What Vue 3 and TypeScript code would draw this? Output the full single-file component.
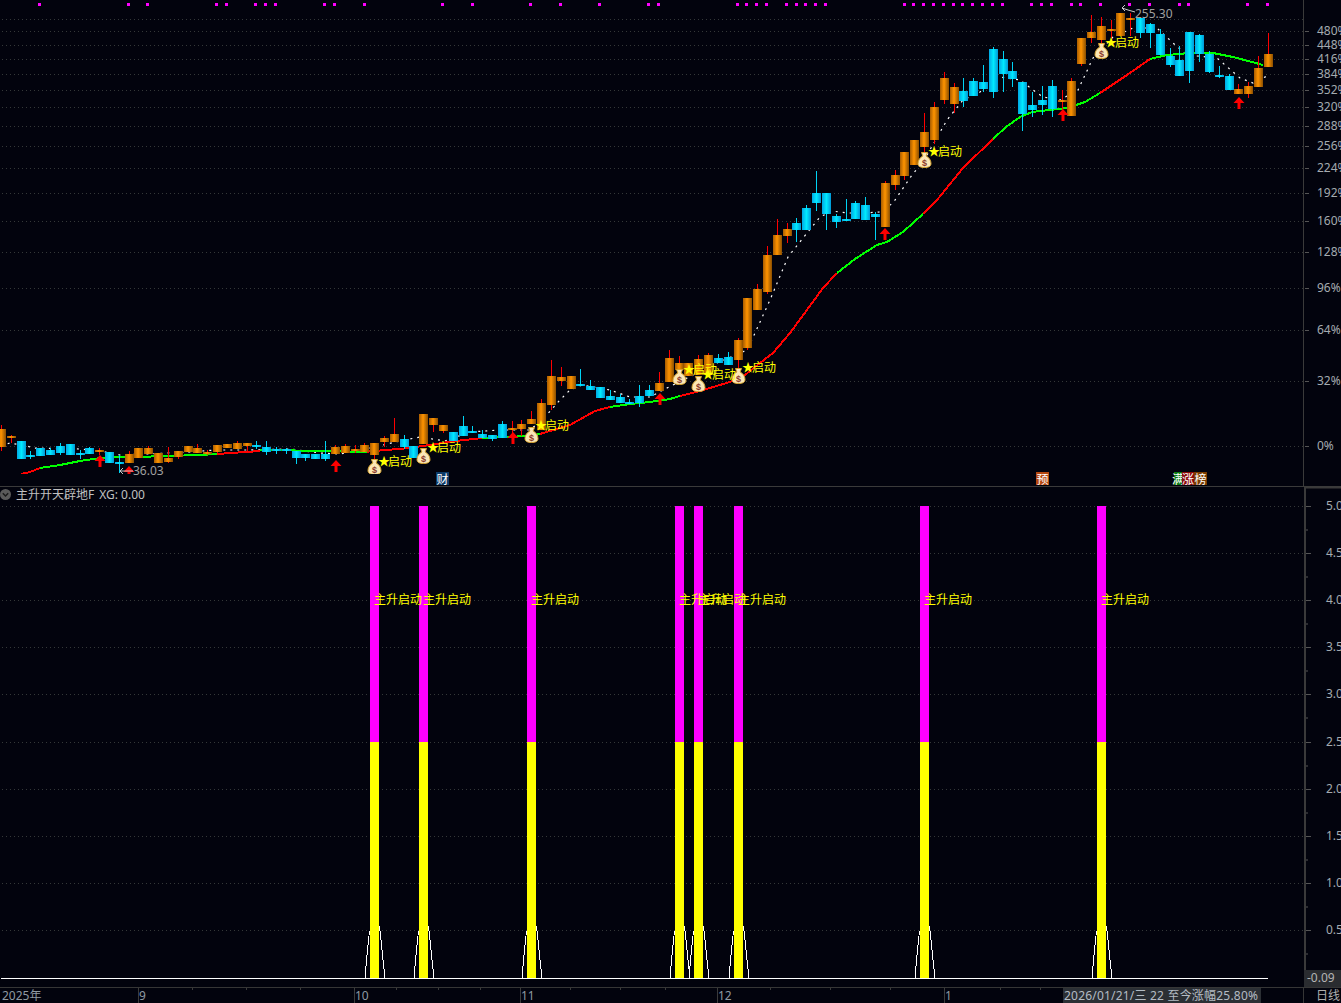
<script setup lang="ts">
type Candle = [string, number, number, number?, number?];

const raw: Candle[] = [
  ['o',429,447,425,451],['o',436,438,435,443],['c',441,459],['c',455,457,451,459],['c',448,456],
  ['c',450,455,448,455],['c',446,453,443,455],['c',444,455],['c',453,455,450,459],['c',448,454,447,454],
  ['o',450,451,448,455],['c',452,463],['c',462,463,455,473],['o',454,463,451,463],['o',448,458],
  ['o',448,454,446,454],['o',453,463],['o',458,462,447,463],['o',451,457,451,459],['o',446,452],
  ['o',448,453,444,453],['o',452,453,450,455],['o',445,452,445,455],['o',444,448],['o',443,449,441,449],
  ['o',443,446,443,452],['c',445,447,441,449],['c',447,452,441,455],['c',449,450,447,454],['c',449,450,448,454],
  ['c',451,458,451,464],['c',454,458,454,461],['c',454,459],['c',454,459,441,461],['o',447,454,445,454],
  ['o',446,453,444,453],['o',449,451,445,453],['o',445,452,443,452],['o',443,455,443,462],['o',438,442,436,447],
  ['o',434,442,418,442],['c',439,447,435,449],['c',446,458],['o',414,444],['o',418,425,418,432],
  ['o',425,431,425,433],['c',432,441],['c',426,436,416,436],['c',431,433,426,433],['c',434,438,430,438],
  ['c',435,439,435,441],['c',424,438,421,438],['o',428,430,421,444],['o',424,429,420,436],['o',419,424,411,424],
  ['o',403,430,399,430],['o',376,405,360,410],['o',377,381,367,386],['o',376,389],['c',384,385,369,386],
  ['c',386,390,380,390],['c',387,398],['c',396,400,390,400],['c',397,403,394,403],['c',402,403,399,404],
  ['c',396,403,385,407],['c',390,396,385,396],['o',383,391,372,391],['o',358,382,350,382],['o',363,370,356,373],
  ['o',363,376],['o',359,375,355,375],['o',355,375,353,375],['c',358,363,354,363],['c',357,365,352,365],
  ['o',340,360,338,368],['o',298,348,298,350],['o',289,310,284,310],['o',255,292,246,294],['o',235,255,219,255],
  ['o',229,236,223,243],['c',223,230,218,242],['c',208,230,205,230],['c',193,203,171,211],['c',193,214,193,230],
  ['c',216,222,214,228],['c',219,220,199,220],['c',203,219,201,219],['c',205,220,197,220],['c',214,217,212,240],
  ['o',183,227,181,227],['o',175,185,170,190],['o',152,176,152,180],['o',140,165],['o',132,147,113,152],
  ['o',107,140,102,144],['o',78,100,72,104],['o',87,104,83,113],['c',91,101,78,107],['c',81,96,78,96],
  ['c',82,89,65,92],['c',49,92,47,98],['c',59,74,51,92],['c',71,79,62,87],['c',82,114,82,131],
  ['c',105,110,92,117],['c',100,105,86,115],['c',86,109,80,117],['o',100,102,90,110],['o',81,116,78,116],
  ['o',38,64,38,66],['o',32,38,15,43],['o',26,40,17,45],['o',29,30,20,39],['o',13,36],
  ['o',18,19,13,36],['c',18,33,18,38],['c',24,33,23,48],['c',34,55,29,55],['c',56,65,48,67],
  ['c',60,76,46,76],['c',32,71,32,83],['c',35,54,34,62],['c',54,72,51,73],['c',75,77,66,78],
  ['c',76,90,74,90],['o',89,94,84,94],['o',86,94,82,98],['o',68,87,56,87],['o',54,67,33,67],
];

const candles = raw.map((d, i) => {
  const x = 1.5 + 9.82 * i;
  const top = d[1];
  const h = Math.max(d[2] - d[1], 1.5);
  return {
    id: i,
    body: Math.round(x - 4.5),
    wick: Math.round(x - 0.5),
    top,
    h,
    wickTop: d[3] ?? top,
    wickH: (d[4] ?? d[2]) - (d[3] ?? top),
    up: d[0] === 'o',
  };
});

const axisTop = ['480%|31', '448%|45', '416%|59', '384%|74', '352%|90', '320%|107', '288%|126', '256%|146', '224%|168', '192%|193', '160%|221', '128%|252', '96%|288', '64%|330', '32%|381', '0%|446']
  .map((s) => { const [label, y] = s.split('|'); return { label, y: Number(y) }; });
const gridTop = [19, ...axisTop.map((a) => a.y)];

const axisLow = [
  { label: '5.0', y: 506 }, { label: '4.5', y: 553 }, { label: '4.0', y: 600 }, { label: '3.5', y: 647 }, { label: '3.0', y: 694 },
  { label: '2.5', y: 742 }, { label: '2.0', y: 789 }, { label: '1.5', y: 836 }, { label: '1.0', y: 883 }, { label: '0.5', y: 930 },
];
const gridLow = axisLow.map((a) => a.y);
const minorLow = axisLow.map((a) => a.y + 23.5);

const squares = [39, 128, 147, 216, 226, 255, 265, 275, 324, 334, 364, 442, 472, 530, 560, 599, 648, 658, 737, 746, 756, 766, 786, 796, 805, 815, 825, 904, 913, 923, 933, 943, 953, 962, 972, 982, 992, 1002, 1031, 1041, 1051, 1071, 1080, 1100, 1129, 1149, 1179, 1188, 1247, 1267];

const maSegments: { color: string; pts: string }[] = [
  { color: '#ff0000', pts: '21,474 30,472 40,468' },
  { color: '#00ff00', pts: '40,468 60,465 80,461 100,458 120,457 145,456.7 200,455 217,454' },
  { color: '#ff0000', pts: '217,454 260,451' },
  { color: '#00ff00', pts: '260,450 330,451 350,451.7 367,451.7' },
  { color: '#ff0000', pts: '367,451.7 385,450 400,449 430,445 450,441.7 482,438' },
  { color: '#00ff00', pts: '482,438 505,437 530,436 540,434' },
  { color: '#ff0000', pts: '540,434 570,425 595,411 610,407' },
  { color: '#00ff00', pts: '610,407 630,404 650,402 670,399 680,396' },
  { color: '#ff0000', pts: '680,396 700,391 730,382 745,375 760,363 773,353 790,333 823,288 837,273' },
  { color: '#00ff00', pts: '837,273 855,259 877,245 887,242 903,232 923,214' },
  { color: '#ff0000', pts: '923,214 937,200 963,168 993,139' },
  { color: '#00ff00', pts: '993,139 1006,127 1020,117 1032,112 1067,108 1085,102 1100,93' },
  { color: '#ff0000', pts: '1100,93 1127,75 1150,59' },
  { color: '#00ff00', pts: '1150,59 1167,55 1190,53 1213,53 1233,57 1263,65' },
];

const dotted = '1,446 10,443 27,446 33,448 80,449 100,451 120,455 145,454 190,452 215,450 250,450 290,449 320,453 340,454 370,448 400,441 420,437 445,441 470,432 500,430 530,430 545,417 560,400 570,390 582,385 610,390 630,397 650,397 663,390 677,383 717,363 747,350 755,333 770,300 788,257 807,233 820,217 832,211 847,213 863,213 880,212 893,203 912,175 923,162 947,120 963,100 980,92 1000,77 1020,80 1033,90 1043,97 1060,100 1078,90 1093,58 1113,37 1133,28 1157,28 1173,43 1187,55 1217,58 1240,78 1253,83 1267,76';

const arrows = [[100, 455], [129, 466], [336, 460], [513, 432], [660, 393], [885, 228], [1063, 109], [1239, 97]];

const signals = [
  { c: 374.5, bagY: 467, lx: 378, ly: 466 },
  { c: 423.5, bagY: 456, lx: 427, ly: 452 },
  { c: 531.5, bagY: 435, lx: 535, ly: 430 },
  { c: 679.5, bagY: 377, lx: 683, ly: 374 },
  { c: 698.5, bagY: 384, lx: 702, ly: 379 },
  { c: 738.5, bagY: 376, lx: 742, ly: 372 },
  { c: 924.5, bagY: 160, lx: 928, ly: 156 },
  { c: 1101.5, bagY: 51, lx: 1105, ly: 47 },
];

const pulses = signals.map((s) => ({
  c: s.c,
  left: Math.round(s.c - 4.5),
  tail: `${s.c - 9.5},978.5 ${s.c - 8},960 ${s.c - 6.5},945 ${s.c - 5},931`,
  head: `${s.c + 5},926 ${s.c + 6.5},940 ${s.c + 8.5},960 ${s.c + 10.5},978.5`,
}));

const badges = [
  { x: 436, w: 13, fill: '#0c3a68', t: '财' },
  { x: 1036, w: 13, fill: '#b4470f', t: '预' },
  { x: 1174, w: 8, fill: '#0a7a12', t: '满' },
  { x: 1182, w: 12, fill: '#8a0a0a', t: '涨' },
  { x: 1194, w: 13, fill: '#7a3c00', t: '榜' },
];

const months = [
  { x: 2, label: '2025年', tick: 0 },
  { x: 139, label: '9', tick: 138 },
  { x: 355, label: '10', tick: 354 },
  { x: 521, label: '11', tick: 520 },
  { x: 718, label: '12', tick: 717 },
  { x: 945, label: '1', tick: 944 },
];
const minorTicks = [192, 246, 300, 396, 438, 480, 570, 620, 665, 770, 830, 890, 1000, 1040];
</script>

<template>
  <div class="screen">
    <div class="pane-top">
      <svg class="plot" width="1303" height="486" viewBox="0 0 1303 486">
        <defs>
          <linearGradient id="orange" x1="0" x2="1" y1="0" y2="0">
            <stop offset="0" stop-color="#a85c00" />
            <stop offset="0.45" stop-color="#ff9400" />
            <stop offset="1" stop-color="#8a4e00" />
          </linearGradient>
          <linearGradient id="cyan" x1="0" x2="1" y1="0" y2="0">
            <stop offset="0" stop-color="#00a8e4" />
            <stop offset="0.5" stop-color="#00eaff" />
            <stop offset="1" stop-color="#0098d8" />
          </linearGradient>
          <clipPath id="priceClip"><rect x="0" y="0" width="1303" height="474" /></clipPath>
        </defs>
        <line v-for="y in gridTop" :key="y" class="grid" x1="2" x2="1303" :y1="y + 0.5" :y2="y + 0.5" />
        <rect v-for="x in squares" :key="x" class="square" :x="x - 1.5" y="3" width="3" height="3" />
        <g clip-path="url(#priceClip)">
          <polyline class="dots" :points="dotted" />
          <polyline v-for="(s, i) in maSegments" :key="i" class="ma" :points="s.pts" :stroke="s.color" />
          <g v-for="k in candles" :key="k.id" :class="k.up ? 'up' : 'down'">
            <rect class="wick" :x="k.wick" :y="k.wickTop" width="1" :height="k.wickH" />
            <rect class="body" :x="k.body" :y="k.top" width="9" :height="k.h" />
          </g>
          <path v-for="a in arrows" :key="a[0]" class="arrow"
            :d="`M${a[0]} ${a[1]}l5.5 6h-4v6h-3v-6h-4z`" />
          <g v-for="s in signals" :key="s.c" :transform="`translate(${s.c} ${s.bagY})`">
            <path class="bag" d="M-3-7.5H3L1.6-4C5-2.5 6.5 1 6.5 3.5 6.5 6.5 4 7.5 0 7.5S-6.5 6.5-6.5 3.5C-6.5 1-5-2.5-1.6-4Z" />
            <text class="bag-sign" x="0" y="5.5">$</text>
          </g>
          <text v-for="s in signals" :key="`l${s.c}`" class="signal" :x="s.lx" :y="s.ly">★<tspan dx="-2">启动</tspan></text>
        </g>
        <polyline class="note" points="123,468 120,471 123,474 120,471 133,471" />
        <text class="mark" x="133" y="475">36.03</text>
        <polyline class="note" points="1125,5 1122,8 1125,11 1122,8 1128,10 1135,12" />
        <text class="mark" x="1135" y="18">255.30</text>
        <g v-for="b in badges" :key="b.t">
          <rect :x="b.x" y="472" :width="b.w" height="13" :fill="b.fill" />
          <text class="badge" :x="b.x + b.w / 2" y="483.5">{{ b.t }}</text>
        </g>
      </svg>
      <svg class="axis" width="38" height="486" viewBox="1303 0 38 486">
        <rect x="1303" y="0" width="1" height="486" class="rule" />
        <g v-for="a in axisTop" :key="a.label">
          <rect class="tick" x="1305" :y="a.y" width="4" height="1" />
          <text class="axis-label" x="1317" :y="a.y + 4">{{ a.label }}</text>
        </g>
      </svg>
    </div>

    <div class="pane-low">
      <div class="low-main">
        <div class="legend">
          <svg width="11" height="11" viewBox="0 0 11 11">
            <circle cx="5.5" cy="5.5" r="5.5" fill="#5a5a5a" />
            <polyline points="2.8,4.3 5.5,7 8.2,4.3" fill="none" stroke="#1a1a1a" stroke-width="1.5" />
          </svg>
          <span>主升开天辟地F</span>
          <span>XG: 0.00</span>
        </div>
        <svg class="plot" width="1303" height="482" viewBox="0 505 1303 482">
          <line v-for="y in gridLow" :key="y" class="grid" x1="2" x2="1303" :y1="y + 0.5" :y2="y + 0.5" />
          <line class="baseline" x1="1" x2="1268" y1="978.5" y2="978.5" />
          <g v-for="p in pulses" :key="p.c">
            <polyline class="pulse" :points="p.tail" />
            <polyline class="pulse" :points="p.head" />
            <rect class="bar-magenta" :x="p.left" y="506" width="9" height="236" />
            <rect class="bar-yellow" :x="p.left" y="742" width="9" height="236" />
          </g>
          <text v-for="p in pulses" :key="`t${p.c}`" class="sig-text" :x="p.c - 0.5" y="604">主升启动</text>
        </svg>
      </div>
      <svg class="axis" width="38" height="500" viewBox="1303 487 38 500">
        <rect x="1304" y="487" width="2" height="500" class="rule" />
        <rect x="1304" y="487" width="37" height="1.5" class="rule" />
        <g v-for="a in axisLow" :key="a.label">
          <rect class="tick" x="1306" :y="a.y" width="5" height="1" />
          <text class="axis-label" x="1326" :y="a.y + 4">{{ a.label }}</text>
        </g>
        <rect v-for="m in minorLow" :key="m" class="tick" x="1306" :y="m" width="2" height="1" />
        <rect x="1304" y="970" width="37" height="17" class="low-box" />
        <text class="axis-label bright" x="1307" y="982">-0.09</text>
      </svg>
    </div>

    <div class="pane-bottom">
      <svg width="1303" height="15" viewBox="0 988 1303 15">
        <rect v-for="m in months.slice(1)" :key="m.tick" class="rule" :x="m.tick" y="988" width="1" height="15" />
        <rect v-for="t in minorTicks" :key="t" class="rule" :x="t" y="988" width="1" height="2" />
        <text v-for="m in months" :key="m.label" class="time-label" :x="m.x" y="1000">{{ m.label }}</text>
        <rect class="date-box" x="1063" y="988" width="198" height="15" />
        <text class="date-text" x="1064" y="1000">2026/01/21/三 22 至今涨幅25.80%</text>
      </svg>
      <div class="period">日线</div>
    </div>
  </div>
</template>

<style scoped>
.screen {
  width: 1341px;
  height: 1003px;
  display: flex;
  flex-direction: column;
  overflow: hidden;
  background: #02030d;
  font-family: "Noto Sans", "Noto Sans CJK SC", sans-serif;
}
svg { display: block; flex: none; }
.pane-top {
  display: flex;
  height: 487px;
  border-bottom: 1px solid #3a3a3a;
  box-sizing: border-box;
}
.pane-low {
  display: flex;
  height: 500px;
}
.low-main {
  width: 1303px;
  display: flex;
  flex-direction: column;
}
.legend {
  height: 18px;
  padding-bottom: 4px;
  box-sizing: border-box;
  display: flex;
  align-items: center;
  gap: 5px;
  font-size: 12px;
  color: #c0c0c0;
}
.pane-bottom {
  height: 16px;
  box-sizing: border-box;
  border-top: 1px solid #363636;
  display: flex;
}
.period {
  width: 38px;
  box-sizing: border-box;
  border-left: 1px solid #363636;
  padding-left: 12px;
  font-size: 12px;
  line-height: 15px;
  color: #b0b0b0;
  white-space: nowrap;
  overflow: hidden;
}
.grid { stroke: #343838; stroke-width: 1; stroke-dasharray: 1 3; }
.rule { fill: #3a3a3a; }
.tick { fill: #555; }
.square { fill: #ff00ff; shape-rendering: crispEdges; }
.dots { fill: none; stroke: #fff; stroke-width: 1.2; stroke-dasharray: 2 5; }
.ma { fill: none; stroke-width: 2; shape-rendering: crispEdges; }
.wick, .body { shape-rendering: crispEdges; }
.up .wick { fill: #ff0000; }
.down .wick { fill: #00d4f5; }
.up .body { fill: url(#orange); }
.down .body { fill: url(#cyan); }
.arrow { fill: #ff0000; }
.bag { fill: #fbe7b6; stroke: #d9a52e; stroke-width: 1; }
.bag-sign { fill: #8a3a2a; font-size: 9px; font-weight: 700; text-anchor: middle; font-family: "Liberation Sans", sans-serif; }
.signal { fill: #ffff00; font-size: 12px; font-family: "Noto Sans CJK SC", sans-serif; }
.note { fill: none; stroke: #c8c8c8; stroke-width: 1; }
.mark { fill: #a0a0a0; font-size: 12px; }
.badge { fill: #fff; font-size: 12px; text-anchor: middle; font-family: "Noto Sans CJK SC", sans-serif; }
.axis-label { fill: #a4abb0; font-size: 12px; }
.axis-label.bright { fill: #b4b4b4; }
.low-box { fill: #2a2c30; }
.baseline { stroke: #fff; stroke-width: 1; shape-rendering: crispEdges; }
.pulse { fill: none; stroke: #fff; stroke-width: 1; shape-rendering: crispEdges; }
.bar-magenta { fill: #ff00ff; shape-rendering: crispEdges; }
.bar-yellow { fill: #ffff00; shape-rendering: crispEdges; }
.sig-text { fill: #ffff00; font-size: 12px; font-family: "Noto Sans CJK SC", sans-serif; }
.time-label { fill: #8f9aa3; font-size: 12px; }
.date-box { fill: #2b2f34; }
.date-text { fill: #b4bcc4; font-size: 12px; letter-spacing: 0.2px; }
</style>
